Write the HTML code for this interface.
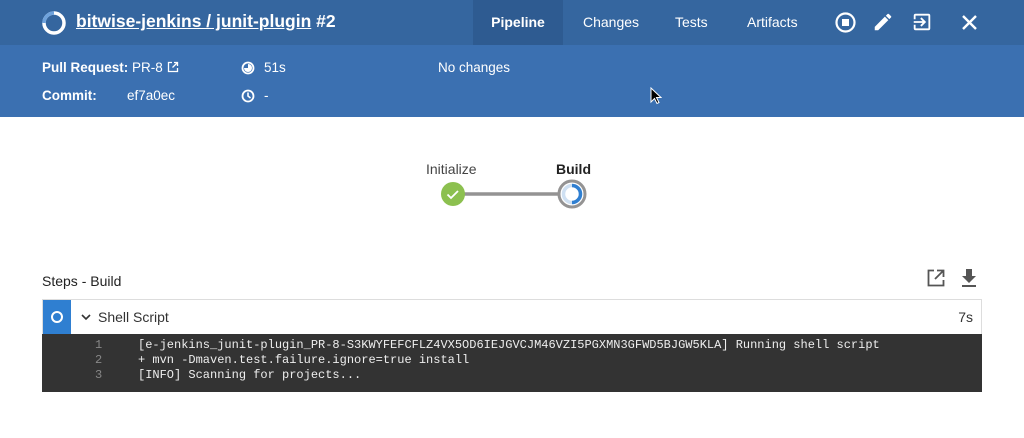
<!DOCTYPE html>
<html><head><meta charset="utf-8"><style>
*{box-sizing:border-box;margin:0;padding:0}
body{width:1024px;height:438px;background:#fff;font-family:"Liberation Sans",sans-serif;position:relative;overflow:hidden;color:#333}
.top{position:absolute;left:0;top:0;width:1024px;height:45px;background:#35669f;color:#fff}
.sub{position:absolute;left:0;top:45px;width:1024px;height:72px;background:#3b70b1;color:#fff;font-size:13.5px}
.a{position:absolute;white-space:nowrap}
.tab{position:absolute;top:0;height:45px;line-height:45px;font-size:14px;color:#fff}
.log{position:absolute;left:42px;top:299px;width:940px;height:93px;border:1px solid #ddd}
.mono{font-family:"Liberation Mono",monospace;font-size:12px;color:#eee}
</style></head><body>
<div class="top">
 <svg class="a" style="left:41px;top:10px" width="26" height="26" viewBox="0 0 26 26"><circle cx="13" cy="13" r="10" fill="none" stroke="#fff" stroke-width="3.5"/><path d="M13 3 A10 10 0 0 0 3 13" fill="none" stroke="#6fa3dd" stroke-width="3.5"/></svg>
 <div class="a" style="left:76px;top:11px;font-size:17.5px;font-weight:bold"><span style="text-decoration:underline">bitwise-jenkins / junit-plugin</span> #2</div>
 <div class="tab" style="left:473px;width:90px;background:#2e5b91;text-align:center;font-weight:bold">Pipeline</div>
 <div class="tab" style="left:583px">Changes</div>
 <div class="tab" style="left:675px">Tests</div>
 <div class="tab" style="left:747px">Artifacts</div>
 <svg class="a" style="left:834px;top:11px" width="23" height="23" viewBox="0 0 23 23"><circle cx="11.5" cy="11.5" r="9" fill="none" stroke="#fff" stroke-width="2.2"/><rect x="8" y="8" width="7" height="7" fill="#fff"/></svg>
 <svg class="a" style="left:872px;top:11px" width="22" height="22" viewBox="0 0 24 24"><path d="M3 17.25V21h3.75L17.81 9.94l-3.75-3.75L3 17.25zM20.71 7.04a1 1 0 0 0 0-1.410l-2.34-2.34a1 1 0 0 0-1.41 0l-1.83 1.83 3.75 3.75 1.83-1.83z" fill="#fff"/></svg>
 <svg class="a" style="left:911px;top:11px" width="22" height="22" viewBox="0 0 24 24"><path d="M10.09 15.59L11.5 17l5-5-5-5-1.41 1.41L12.67 11H3v2h9.67l-2.58 2.59zM19 3H5a2 2 0 0 0-2 2v4h2V5h14v14H5v-4H3v4a2 2 0 0 0 2 2h14a2 2 0 0 0 2-2V5a2 2 0 0 0-2-2z" fill="#fff"/></svg>
 <svg class="a" style="left:961px;top:14px" width="17" height="17" viewBox="0 0 17 17"><path d="M2 2L15 15M15 2L2 15" stroke="#fff" stroke-width="2.4"/></svg>
</div>
<div class="sub">
 <div class="a" style="left:42px;top:15px"><b>Pull Request:</b> PR-8 <svg width="12" height="12" viewBox="0 0 12 12" style="vertical-align:-1px"><path d="M5 1.5H1.5v9h9V7M7 1.5h3.5V5M10.5 1.5L5.5 6.5" fill="none" stroke="#fff" stroke-width="1.3"/></svg></div>
 <div class="a" style="left:42px;top:43px"><b>Commit:</b></div>
 <div class="a" style="left:127px;top:43px">ef7a0ec</div>
 <svg class="a" style="left:241px;top:16px" width="14" height="14" viewBox="0 0 14 14"><circle cx="7" cy="7" r="5.5" fill="none" stroke="#fff" stroke-width="1.8"/><path d="M7 7V3A4 4 0 1 1 3 7z" fill="#fff"/></svg>
 <div class="a" style="left:264px;top:15px">51s</div>
 <svg class="a" style="left:241px;top:44px" width="14" height="14" viewBox="0 0 14 14"><circle cx="7" cy="7" r="5.5" fill="none" stroke="#fff" stroke-width="1.8"/><path d="M7 3.5V7l2.5 2" fill="none" stroke="#fff" stroke-width="1.6"/></svg>
 <div class="a" style="left:264px;top:43px">-</div>
 <div class="a" style="left:438px;top:15px">No changes</div>
 <svg class="a" style="left:650px;top:42px" width="12" height="18" viewBox="0 0 12 18"><path d="M1 1v14l3.5-3.5 2.5 5 2-1-2.5-5H11z" fill="#000" stroke="#fff" stroke-width="1"/></svg>
</div>
<div class="a" style="left:426px;top:161px;font-size:14px;color:#444">Initialize</div>
<div class="a" style="left:556px;top:161px;font-size:14px;color:#222;font-weight:bold">Build</div>
<svg class="a" style="left:435px;top:178px" width="160" height="34" viewBox="0 0 160 34">
 <line x1="18" y1="16" x2="137" y2="16" stroke="#949393" stroke-width="3.5"/>
 <circle cx="18" cy="16" r="12" fill="#8cc04f"/>
 <path d="M12.5 16.5l3.5 3.5 7-7" fill="none" stroke="#fff" stroke-width="1.8"/>
 <circle cx="137" cy="16" r="13" fill="#fff" stroke="#949393" stroke-width="3"/>
 <circle cx="137" cy="16" r="8.5" fill="none" stroke="#cfe0f2" stroke-width="3.5"/>
 <path d="M137 7.5A8.5 8.5 0 0 1 137 24.5" fill="none" stroke="#2f7fd1" stroke-width="3.5"/>
</svg>
<div class="a" style="left:42px;top:273px;font-size:14px;color:#222">Steps - Build</div>
<svg class="a" style="left:926px;top:268px" width="20" height="20" viewBox="0 0 20 20"><path d="M8 2.5H2.5v15h15V12M11 2.5h6.5V9M17.5 2.5L9 11" fill="none" stroke="#555" stroke-width="1.8"/></svg>
<svg class="a" style="left:960px;top:268px" width="18" height="20" viewBox="0 0 18 20"><path d="M6 1h6v7h4l-7 7-7-7h4z" fill="#555"/><rect x="2" y="17" width="14" height="2" fill="#555"/></svg>
<div class="log">
 <div class="a" style="left:0;top:0;width:28px;height:34px;background:#2f7fd1"></div>
 <svg class="a" style="left:7px;top:10px" width="14" height="14" viewBox="0 0 14 14"><circle cx="7" cy="7" r="5" fill="none" stroke="#fff" stroke-width="2"/></svg>
 <svg class="a" style="left:38px;top:13px" width="10" height="8" viewBox="0 0 10 8"><path d="M1 2l4 4 4-4" fill="none" stroke="#333" stroke-width="1.6"/></svg>
 <div class="a" style="left:55px;top:9px;font-size:14px;color:#333">Shell Script</div>
 <div class="a" style="right:8px;top:9px;font-size:14px;color:#333">7s</div>
 <div class="a" style="left:-1px;top:34px;width:940px;height:58px;background:#333"></div>
 <div class="a mono" style="left:52px;top:38px;line-height:15px;color:#888">1<br>2<br>3</div>
 <div class="a mono" style="left:95px;top:38px;line-height:15px;white-space:pre">[e-jenkins_junit-plugin_PR-8-S3KWYFEFCFLZ4VX5OD6IEJGVCJM46VZI5PGXMN3GFWD5BJGW5KLA] Running shell script
+ mvn -Dmaven.test.failure.ignore=true install
[INFO] Scanning for projects...</div>
</div>
</body></html>
